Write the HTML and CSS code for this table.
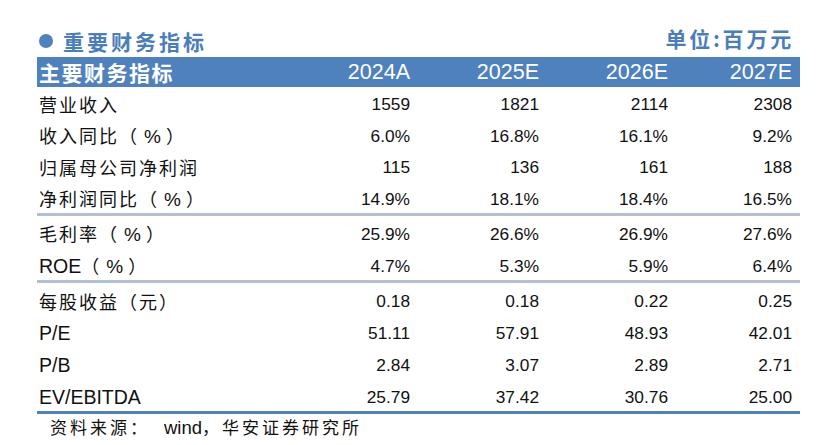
FILE: index.html
```html
<!DOCTYPE html>
<html lang="zh">
<head>
<meta charset="utf-8">
<link rel="stylesheet" href="styles.css">
</head>
<body>
<div class="page">
  <div class="title-row">
    <div class="title"><span class="dot"></span><span class="title-text">重要财务指标</span></div>
    <div class="unit">单位:百万元</div>
  </div>
  <div class="table">
    <div class="row head">
      <div class="label">主要财务指标</div><div class="num">2024A</div><div class="num">2025E</div><div class="num">2026E</div><div class="num">2027E</div>
    </div>
    <div class="section">
      <div class="row"><div class="label">营业收入</div><div class="num">1559</div><div class="num">1821</div><div class="num">2114</div><div class="num">2308</div></div>
      <div class="row"><div class="label">收入同比（<span class="pct">%</span>）</div><div class="num">6.0%</div><div class="num">16.8%</div><div class="num">16.1%</div><div class="num">9.2%</div></div>
      <div class="row"><div class="label">归属母公司净利润</div><div class="num">115</div><div class="num">136</div><div class="num">161</div><div class="num">188</div></div>
      <div class="row"><div class="label">净利润同比（<span class="pct">%</span>）</div><div class="num">14.9%</div><div class="num">18.1%</div><div class="num">18.4%</div><div class="num">16.5%</div></div>
    </div>
    <div class="section">
      <div class="row"><div class="label">毛利率（<span class="pct">%</span>）</div><div class="num">25.9%</div><div class="num">26.6%</div><div class="num">26.9%</div><div class="num">27.6%</div></div>
      <div class="row"><div class="label"><span class="lat">ROE</span>（<span class="pct">%</span>）</div><div class="num">4.7%</div><div class="num">5.3%</div><div class="num">5.9%</div><div class="num">6.4%</div></div>
    </div>
    <div class="section last">
      <div class="row"><div class="label">每股收益（元）</div><div class="num">0.18</div><div class="num">0.18</div><div class="num">0.22</div><div class="num">0.25</div></div>
      <div class="row"><div class="label"><span class="lat">P/E</span></div><div class="num">51.11</div><div class="num">57.91</div><div class="num">48.93</div><div class="num">42.01</div></div>
      <div class="row"><div class="label"><span class="lat">P/B</span></div><div class="num">2.84</div><div class="num">3.07</div><div class="num">2.89</div><div class="num">2.71</div></div>
      <div class="row"><div class="label"><span class="lat">EV/EBITDA</span></div><div class="num">25.79</div><div class="num">37.42</div><div class="num">30.76</div><div class="num">25.00</div></div>
    </div>
  </div>
  <div class="source">资料来源：<span class="wind">wind</span>，华安证券研究所</div>
</div>
</body>
</html>
```

FILE: styles.css
```css
html, body {
  margin: 0;
  padding: 0;
  background: #ffffff;
}
body {
  font-family: "Noto Sans CJK SC", "Liberation Sans", sans-serif;
  color: #111;
}
.page {
  margin-left: 37px;
  width: 763px;
  padding-top: 26px;
}
.title-row {
  height: 31px;
  display: flex;
  justify-content: space-between;
  align-items: flex-start;
}
.title {
  display: flex;
  align-items: center;
  padding-top: 3px;
  color: #4a7ebb;
}
.dot {
  width: 14px;
  height: 14px;
  border-radius: 50%;
  background: #4f81bd;
  margin-left: 2px;
  margin-right: 10px;
}
.title-text {
  font-size: 21px;
  font-weight: 700;
  letter-spacing: 3px;
  line-height: 24px;
}
.unit {
  color: #4a7ebb;
  font-size: 21px;
  font-weight: 700;
  line-height: 24px;
  letter-spacing: 2.8px;
  padding-right: 6px;
}
.table {
  display: flex;
  flex-direction: column;
}
.row {
  display: grid;
  grid-template-columns: 242px 129px 129px 129px 124px;
  padding: 0 8px 0 2px;
  height: 31.5px;
  align-items: center;
}
.section {
  border-bottom: 3px solid #b3bfd6;
}
.section .row {
  padding-top: 3px;
  box-sizing: border-box;
}
.section + .section .row {
  height: 32px;
}
.section.last {
  border-bottom: 3px solid #4f81bd;
}
.head {
  background: #4f81bd;
  color: #fff;
  height: 30px;
}
.head .label {
  font-size: 21px;
  font-weight: 700;
  letter-spacing: 1.5px;
}
.head .num {
  font-family: "Liberation Sans", sans-serif;
  font-size: 21.5px;
}
.label {
  font-size: 18px;
  letter-spacing: 2px;
  white-space: nowrap;
  line-height: 24px;
}
.lat {
  font-family: "Liberation Sans", sans-serif;
  font-size: 19.5px;
  letter-spacing: 0;
}
.pct {
  font-family: "Liberation Sans", sans-serif;
  font-size: 19px;
  letter-spacing: 0;
  padding: 0 5px;
}
.num {
  text-align: right;
  font-family: "Liberation Sans", sans-serif;
  font-size: 17.3px;
  line-height: 24px;
}
.source {
  padding-left: 13px;
  padding-top: 2px;
  font-size: 17px;
  letter-spacing: 3px;
  line-height: 22px;
}
.wind {
  font-family: "Liberation Sans", sans-serif;
  font-size: 18.5px;
  letter-spacing: 0;
  margin-left: 14px;
}
```
